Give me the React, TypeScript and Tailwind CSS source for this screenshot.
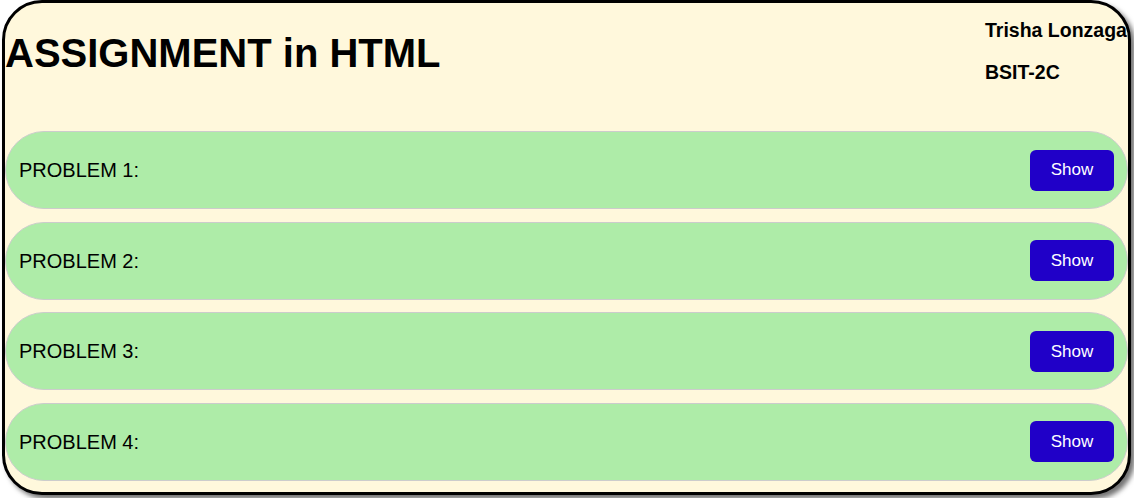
import React from "react";

const problems = ["PROBLEM 1:", "PROBLEM 2:", "PROBLEM 3:", "PROBLEM 4:"];

export default function App() {
  return (
    <div className="w-[1134px] h-[498px] overflow-hidden bg-white" style={{ fontFamily: '"Liberation Sans", Arial, sans-serif' }}>
      <div className="ml-[2px] w-[1129px] h-[495px] border-[3px] border-black rounded-[40px] bg-[#fff8dc] shadow-[4px_4px_5px_rgba(0,0,0,0.55)] overflow-hidden flex flex-col">
        <div className="flex h-[128px] shrink-0">
          <h1 className="flex-1 mt-[27px] text-[40px] leading-[46px] font-bold text-black whitespace-nowrap">
            ASSIGNMENT in HTML
          </h1>
          <div className="w-[143px] pt-[16px] flex flex-col gap-[20px] text-[19.5px] leading-[22px] font-bold text-black whitespace-nowrap">
            <div>Trisha Lonzaga</div>
            <div>BSIT-2C</div>
          </div>
        </div>
        <div className="flex flex-col gap-[12.67px]">
          {problems.map((p) => (
            <div
              key={p}
              className="h-[78px] rounded-full border border-[#cccccc] bg-[#aeeca8] flex items-center justify-between pl-[13px] pr-[13px]"
            >
              <span className="text-[20px] text-black">{p}</span>
              <button className="w-[84px] h-[41px] rounded-[6px] bg-[#2000c8] text-white text-[17px]">
                Show
              </button>
            </div>
          ))}
        </div>
      </div>
    </div>
  );
}
